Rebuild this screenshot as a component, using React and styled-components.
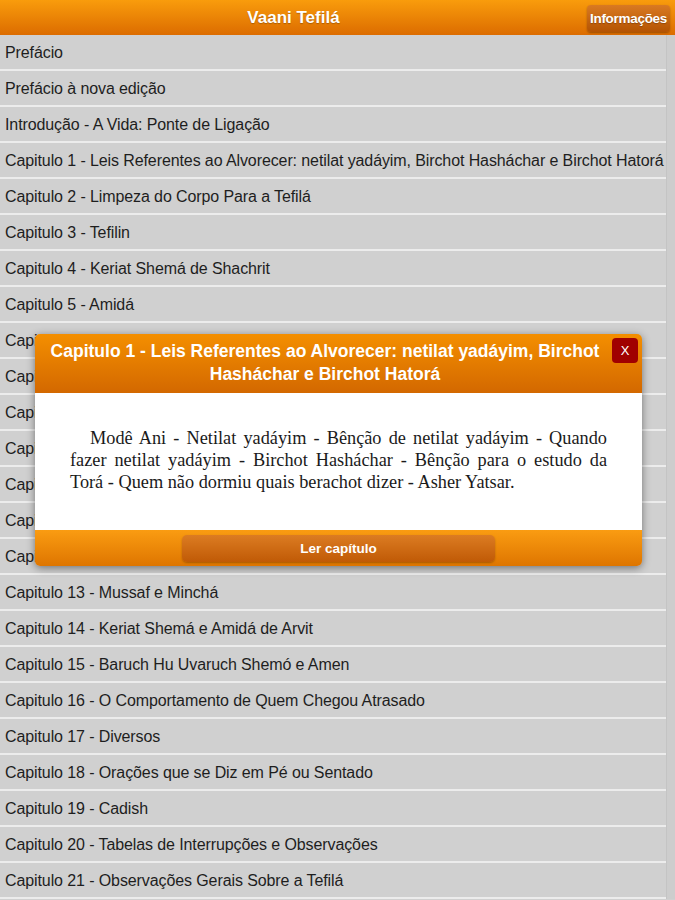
import React from 'react';
import styled, { createGlobalStyle } from 'styled-components';

const GlobalStyle = createGlobalStyle`
  html, body {
    margin: 0;
    padding: 0;
    background: #d0d0d0;
    font-family: "Liberation Sans", Arial, sans-serif;
  }
`

const Page = styled.div`
  position: relative;
  width: 675px;
  height: 900px;
  overflow: hidden;
  background: #d0d0d0;
`

const Header = styled.div`
  height: 35px;
  display: flex;
  align-items: center;
  padding-right: 5px;
  background: linear-gradient(#f99c0c, #dc6c00);
  color: #fff;
  font-weight: bold;
  text-shadow: 0 1px 1px rgba(0, 0, 0, 0.25);
`

const Title = styled.div`
  flex: 1;
  text-align: center;
  font-size: 17px;
`

const InfoButton = styled.div`
  height: 27px;
  margin-top: 2px;
  padding: 0 3px;
  display: flex;
  align-items: center;
  border-radius: 4px;
  background: linear-gradient(#d97a22, #b45302);
  box-shadow: 0 1px 2px rgba(0, 0, 0, 0.3);
  font-size: 13.5px;
  letter-spacing: -0.3px;
`

const Body = styled.div`
  display: flex;
`

const List = styled.div`
  flex: 1;
`

const Track = styled.div`
  width: 8px;
  border-left: 1px solid #c4c4c4;
  background: #cdcdcd;
`

const Row = styled.div`
  display: flex;
  align-items: center;
  padding: 2px 0 0 5px;
  box-sizing: border-box;
  height: 36px;
  border-bottom: 2px solid #ececec;
  font-size: 16px;
  letter-spacing: -0.1px;
  color: #1e1e1e;
  white-space: nowrap;
  overflow: hidden;
`

const Modal = styled.div`
  position: absolute;
  left: 35px;
  top: 334px;
  width: 607px;
  border-radius: 5px;
  overflow: hidden;
  box-shadow: 0 2px 8px rgba(0, 0, 0, 0.45);
`

const ModalHeader = styled.div`
  display: flex;
  align-items: flex-start;
  padding: 6px 4px 7px 14px;
  background: linear-gradient(#f48f00, #d36800);
  color: #fff;
`

const ModalTitle = styled.div`
  flex: 1;
  margin-right: 11px;
  font-weight: bold;
  font-size: 17.5px;
  line-height: 23px;
  text-align: center;
`

const CloseButton = styled.div`
  width: 26px;
  height: 25px;
  margin-top: -2px;
  display: flex;
  align-items: center;
  justify-content: center;
  border-radius: 4px;
  background: #a00000;
  font-size: 13px;
`

const ModalBody = styled.div`
  background: #fff;
  height: 137px;
  box-sizing: border-box;
  padding: 34px 35px 0;
  font-family: "Liberation Serif", "Times New Roman", serif;
  font-size: 18.3px;
  line-height: 22px;
  color: #1a1a1a;
  text-align: justify;
  text-indent: 20px;
`

const ModalFooter = styled.div`
  height: 36px;
  display: flex;
  align-items: center;
  justify-content: center;
  background: linear-gradient(#fa9c12, #de7500);
`

const ReadButton = styled.div`
  width: 313px;
  height: 27px;
  margin-top: 1px;
  display: flex;
  align-items: center;
  justify-content: center;
  border-radius: 5px;
  background: linear-gradient(#dc7c22, #c05a06);
  box-shadow: 0 1px 2px rgba(0, 0, 0, 0.25);
  color: #fff;
  font-weight: bold;
  font-size: 13.5px;
`

const chapters = [
  'Prefácio',
  'Prefácio à nova edição',
  'Introdução - A Vida: Ponte de Ligação',
  'Capitulo 1 - Leis Referentes ao Alvorecer: netilat yadáyim, Birchot Hasháchar e Birchot Hatorá',
  'Capitulo 2 - Limpeza do Corpo Para a Tefilá',
  'Capitulo 3 - Tefilin',
  'Capitulo 4 - Keriat Shemá de Shachrit',
  'Capitulo 5 - Amidá',
  'Capitulo 6 - Kedushá',
  'Capitulo 7 - Tachanun',
  'Capitulo 8 - Leitura da Torá',
  'Capitulo 9 - Ashrei e Uva Letsion',
  'Capitulo 10 - Alenu Leshabeach',
  'Capitulo 11 - Kadish',
  'Capitulo 12 - Birkat Cohanim',
  'Capitulo 13 - Mussaf e Minchá',
  'Capitulo 14 - Keriat Shemá e Amidá de Arvit',
  'Capitulo 15 - Baruch Hu Uvaruch Shemó e Amen',
  'Capitulo 16 - O Comportamento de Quem Chegou Atrasado',
  'Capitulo 17 - Diversos',
  'Capitulo 18 - Orações que se Diz em Pé ou Sentado',
  'Capitulo 19 - Cadish',
  'Capitulo 20 - Tabelas de Interrupções e Observações',
  'Capitulo 21 - Observações Gerais Sobre a Tefilá',
]

export default function App() {
  return (
    <Page>
      <GlobalStyle />
      <Header>
        <Title>Vaani Tefilá</Title>
        <InfoButton>Informações</InfoButton>
      </Header>
      <Body>
        <List>
          {chapters.map(c => <Row key={c}>{c}</Row>)}
        </List>
        <Track />
      </Body>
      <Modal>
        <ModalHeader>
          <ModalTitle>
            Capitulo 1 - Leis Referentes ao Alvorecer: netilat yadáyim, Birchot Hasháchar e Birchot Hatorá
          </ModalTitle>
          <CloseButton>X</CloseButton>
        </ModalHeader>
        <ModalBody>
          Modê Ani - Netilat yadáyim - Bênção de netilat yadáyim - Quando fazer netilat yadáyim - Birchot Hasháchar - Bênção para o estudo da Torá - Quem não dormiu quais berachot dizer - Asher Yatsar.
        </ModalBody>
        <ModalFooter>
          <ReadButton>Ler capítulo</ReadButton>
        </ModalFooter>
      </Modal>
    </Page>
  )
}
